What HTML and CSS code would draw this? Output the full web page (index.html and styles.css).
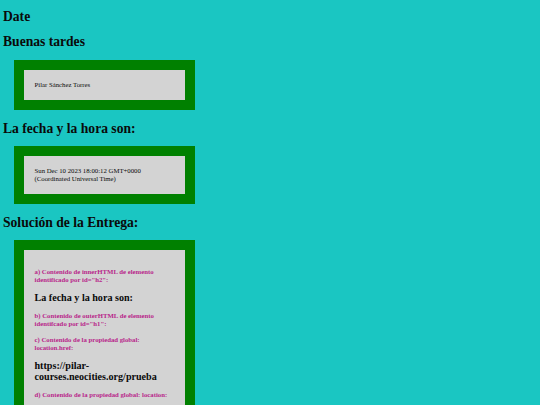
FILE: index.html
```html
<!DOCTYPE html>
<html lang="es">
<head>
  <meta charset="UTF-8" />
  <title>Date</title>
  <link rel="stylesheet" href="styles.css">
</head>
<body>
  <h1>Date</h1>
  <h2 class="saludo">Buenas tardes</h2>
  <div class="caja">
    <p class="nombre">Pilar Sánchez Torres</p>
  </div>

  <h2 id="h2">La fecha y la hora son:</h2>
  <div class="caja">
    <p class="nombre">Sun Dec 10 2023 18:00:12 GMT+0000 (Coordinated Universal Time)</p>
  </div>

  <h2 id="h1">Solución de la Entrega:</h2>
  <div class="caja">
    <h5>a) Contenido de innerHTML de elemento identificado por id="h2":</h5>
    <h4>La fecha y la hora son:</h4>
    <h5>b) Contenido de outerHTML de elemento identifcado por id="h1":</h5>
    <h5>c) Contenido de la propiedad global: location.href:</h5>
    <h4>https://pilar-courses.neocities.org/prueba</h4>
    <h5>d) Contenido de la propiedad global: location:</h5>
  </div>
</body>
</html>
```

FILE: styles.css
```css
html, body {
  height: 100%;
}

body {
  margin: 0;
  padding: 0 0 0 3px;
  overflow: hidden;
  background-color: #1ac6c2;
  color: #0a0a0a;
  font-family: "Liberation Serif", serif;
}

h1, h2 {
  margin: 0;
  font-size: 13.6px;
  line-height: 17px;
}

h1 {
  padding-top: 8px;
}

.saludo {
  margin-top: 8px;
}

#h2, #h1 {
  margin-top: 10px;
}

.caja {
  box-sizing: border-box;
  width: 181px;
  margin: 10px 0 10px 11px;
  padding: 8px 10.5px;
  border: 10px solid #008000;
  background-color: #d3d3d3;
}

#h2 + .caja, #h1 + .caja {
  margin-top: 9px;
}

.caja:last-child {
  height: 300px;
  padding-top: 10px;
}

.nombre {
  margin: 2.5px 0 3.5px;
  font-size: 6.75px;
  line-height: 8px;
}

h5 {
  margin: 8px 0;
  font-size: 6.75px;
  line-height: 8px;
  color: #b8258a;
}

h4 {
  margin: 8px 0;
  font-size: 10.1px;
  line-height: 11.5px;
}
```
